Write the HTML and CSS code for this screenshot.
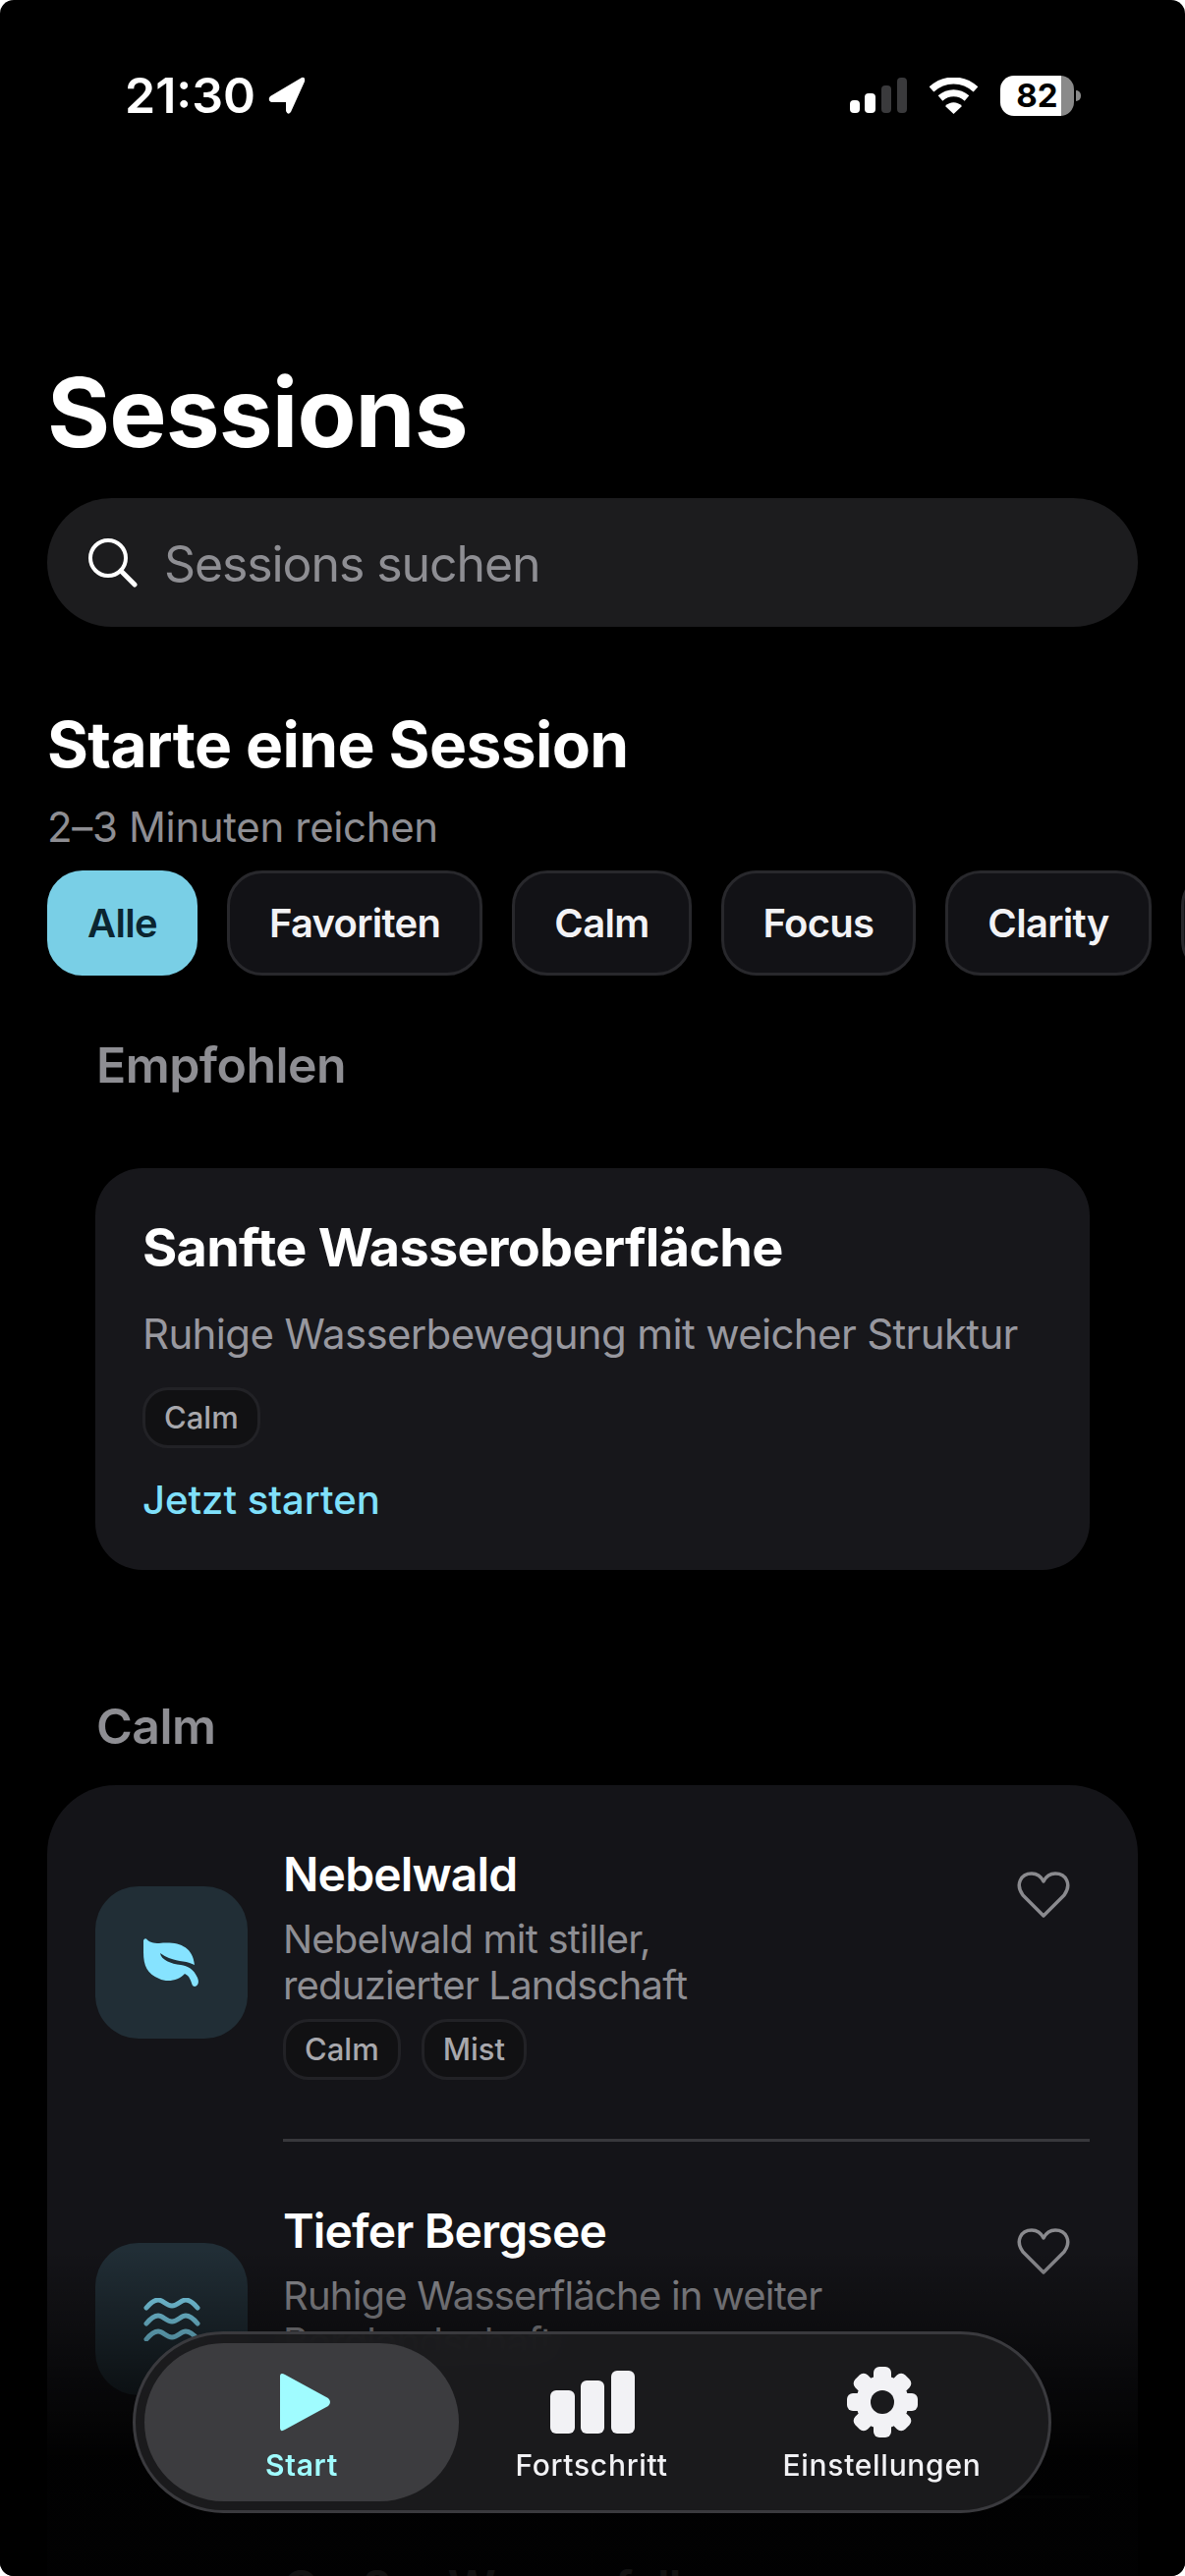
FILE: index.html
```html
<!DOCTYPE html>
<html lang="de">
<head>
    <meta charset="UTF-8">
    <title>Sessions</title>
    <link rel="stylesheet" href="styles.css">
</head>
<body>
<div class="phone">

    <div class="status">
        <div class="status-left">
            <span class="time">21:30</span>
            <svg class="arrow" width="40" height="40" viewBox="0 0 40 40"><path d="M35 2 3 21Q0 25 4 27L19 27 19 36Q21 41 24 37L38 6Q39 1 35 2Z" fill="#fff"/></svg>
        </div>
        <div class="status-right">
            <svg width="58" height="36" viewBox="0 0 58 36">
                <rect x="0" y="23" width="10" height="13" rx="4" fill="#fff"/>
                <rect x="15" y="16" width="11" height="20" rx="4" fill="#fff"/>
                <rect x="32" y="8" width="10" height="28" rx="4" fill="#3a3a3c"/>
                <rect x="48" y="0" width="10" height="36" rx="4" fill="#3a3a3c"/>
            </svg>
            <svg width="49" height="37" viewBox="0 0 49 37">
                <path d="M2 12C15 0 34 0 47 12" fill="none" stroke="#fff" stroke-width="7"/>
                <path d="M11 21C19 14 30 14 38 21" fill="none" stroke="#fff" stroke-width="7"/>
                <path d="M16 29C21 24 28 24 33 29L24.500 37Z" fill="#fff"/>
            </svg>
            <div class="battery"><span>82</span></div>
        </div>
    </div>

    <h1 class="title">Sessions</h1>

    <div class="search">
        <svg width="50" height="50" viewBox="0 0 50 50">
            <circle cx="20" cy="20" r="18" fill="none" stroke="#fff" stroke-width="4"/>
            <path d="M33 33 47 47" stroke="#fff" stroke-width="5" stroke-linecap="round"/>
        </svg>
        <span>Sessions suchen</span>
    </div>

    <h2 class="heading">Starte eine Session</h2>
    <p class="sub">2–3 Minuten reichen</p>

    <div class="chips">
        <div class="chip active">Alle</div>
        <div class="chip">Favoriten</div>
        <div class="chip">Calm</div>
        <div class="chip">Focus</div>
        <div class="chip">Clarity</div>
        <div class="chip chip-more"></div>
    </div>

    <h3 class="group first">Empfohlen</h3>

    <div class="featured">
        <div class="featured-title">Sanfte Wasseroberfläche</div>
        <div class="featured-desc">Ruhige Wasserbewegung mit weicher Struktur</div>
        <div class="tags featured-tags"><span class="tag">Calm</span></div>
        <div class="start-link">Jetzt starten</div>
    </div>

    <h3 class="group">Calm</h3>

    <div class="list">
        <div class="row">
            <div class="thumb">
                <svg width="58" height="50" viewBox="0 0 58 50"><path d="M3 .5C6 4 10 5 16 5 34 3 50 7 52 27L47 25C38 22 30 24 17 15 18 22 28 26 38 27 45 28 51 31 55 40 58 47 53 51 50 48 48 43 47 38 42 36 36 43 24 45 16 41 4 36 0 28 0 14L0 2Q1-.5 3 .5Z" fill="#86e3ff"/></svg>
            </div>
            <div class="row-body">
                <div class="row-text">
                    <div class="row-title">Nebelwald</div>
                    <div class="row-desc">Nebelwald mit stiller,<br>reduzierter Landschaft</div>
                    <div class="tags"><span class="tag">Calm</span><span class="tag">Mist</span></div>
                </div>
                <svg class="heart" width="54" height="50" viewBox="0 0 54 50"><path d="M27 46 6 25C-2 14 4 3 15 3 21 3 25 7 27 11 29 7 33 3 39 3 50 3 56 14 48 25Z" fill="none" stroke="#8a8a8e" stroke-width="3.500" stroke-linejoin="round"/></svg>
            </div>
        </div>
        <div class="row">
            <div class="thumb">
                <svg width="58" height="44" viewBox="0 0 58 44" fill="none" stroke="#86e3ff" stroke-width="5" stroke-linecap="round">
                    <path d="M3 10C8 4 12 2 15 2 20 2 23 8 29 8 35 8 38 2 43 2 46 2 50 4 55 10"/>
                    <path d="M3 26C8 20 12 18 15 18 20 18 23 24 29 24 35 24 38 18 43 18 46 18 50 20 55 26"/>
                    <path d="M3 42C8 36 12 34 15 34 20 34 23 40 29 40 35 40 38 34 43 34 46 34 50 36 55 42"/>
                </svg>
            </div>
            <div class="row-body">
                <div class="row-text">
                    <div class="row-title">Tiefer Bergsee</div>
                    <div class="row-desc">Ruhige Wasserfläche in weiter<br>Berglandschaft</div>
                    <div class="tags"><span class="tag">Calm</span></div>
                </div>
                <svg class="heart" width="54" height="50" viewBox="0 0 54 50"><path d="M27 46 6 25C-2 14 4 3 15 3 21 3 25 7 27 11 29 7 33 3 39 3 50 3 56 14 48 25Z" fill="none" stroke="#8a8a8e" stroke-width="3.500" stroke-linejoin="round"/></svg>
            </div>
        </div>
        <div class="row">
            <div class="thumb"></div>
            <div class="row-body">
                <div class="row-text">
                    <div class="row-title">Großer Wasserfall</div>
                </div>
            </div>
        </div>
    </div>

    <div class="fade"></div>

    <nav class="tabbar">
        <div class="tab selected">
            <svg width="72" height="72" viewBox="0 0 72 72"><path d="M14 10Q14 5 19 8L63 32Q67 36 63 40L19 64Q14 67 14 62Z" fill="#a0fcff"/></svg>
            <span>Start</span>
        </div>
        <div class="tab">
            <svg class="bars" width="88" height="72" viewBox="0 0 88 72" fill="#f2f2f5">
                <rect x="0" y="24" width="25" height="44" rx="6"/>
                <rect x="31" y="14" width="24" height="54" rx="6"/>
                <rect x="62" y="4" width="24" height="64" rx="6"/>
            </svg>
            <span>Fortschritt</span>
        </div>
        <div class="tab">
            <svg width="72" height="72" viewBox="0 0 72 72">
                <mask id="gearhole">
                    <rect width="72" height="72" fill="#fff"/>
                    <circle cx="36" cy="36" r="12" fill="#000"/>
                </mask>
                <g fill="#f2f2f5" mask="url(#gearhole)">
                    <circle cx="36" cy="36" r="27"/>
                    <rect x="27" y="0" width="18" height="72" rx="6"/>
                    <rect x="27" y="0" width="18" height="72" rx="6" transform="rotate(45 36 36)"/>
                    <rect x="27" y="0" width="18" height="72" rx="6" transform="rotate(90 36 36)"/>
                    <rect x="27" y="0" width="18" height="72" rx="6" transform="rotate(135 36 36)"/>
                </g>
            </svg>
            <span>Einstellungen</span>
        </div>
    </nav>

</div>
</body>
</html>
```

FILE: styles.css
```css
* {
    margin: 0;
    padding: 0;
    box-sizing: border-box;
}

body {
    background: #fff;
    font-family: Inter, "Noto Sans", sans-serif;
    color: #fff;
}

.phone {
    position: relative;
    width: 1206px;
    height: 2622px;
    overflow: hidden;
    background: #000;
    padding: 0 48px;
    border-radius: 14px;
}

/* status bar */
.status {
    height: 194px;
    margin: 0 -48px;
    padding: 0 113px 0 127px;
    display: flex;
    align-items: center;
    justify-content: space-between;
}
.status-left {
    display: flex;
    align-items: center;
    gap: 12px;
}
.time {
    font-size: 50px;
    font-weight: 600;
    line-height: 60px;
}
.status-right {
    display: flex;
    align-items: center;
    gap: 23px;
}
.battery {
    position: relative;
    width: 75px;
    height: 41px;
    border-radius: 14px;
    background: linear-gradient(90deg, #fff 62px, #8a8a8a 62px);
    color: #000;
    font-size: 33px;
    font-weight: 700;
    line-height: 41px;
    text-align: center;
}
.battery::after {
    content: "";
    position: absolute;
    right: -7px;
    top: 15px;
    width: 5px;
    height: 11px;
    border-radius: 0 5px 5px 0;
    background: #8a8a8a;
}

/* header */
.title {
    margin-top: 176px;
    font-size: 98px;
    font-weight: 700;
    line-height: 100px;
    letter-spacing: -.9px;
}
.search {
    margin-top: 37px;
    height: 131px;
    border-radius: 66px;
    background: #1c1c1e;
    padding: 2px 0 0 42px;
    display: flex;
    align-items: center;
    gap: 27px;
    font-size: 50px;
    letter-spacing: -1.1px;
    color: #8e8e93;
}
.search svg {
    margin-top: -2px;
}
.heading {
    margin-top: 85px;
    font-size: 64px;
    font-weight: 700;
    line-height: 70px;
    letter-spacing: -.6px;
}
.sub {
    margin-top: 24px;
    font-size: 42px;
    line-height: 50px;
    letter-spacing: -.35px;
    color: #8e8e93;
}

/* filter chips */
.chips {
    margin-top: 19px;
    display: flex;
    gap: 30px;
}
.chip {
    flex: none;
    height: 107px;
    padding: 0 40px;
    border: 3px solid #28282c;
    border-radius: 36px;
    background: #121216;
    font-size: 40px;
    font-weight: 600;
    line-height: 101px;
    letter-spacing: -.7px;
    color: #f2f2f5;
}
.chip.active {
    padding: 0 38px;
    background: #79cfe6;
    border-color: #79cfe6;
    color: #0b2530;
}

/* groups */
.group {
    margin-top: 129px;
    margin-left: 50px;
    font-size: 50px;
    font-weight: 600;
    line-height: 60px;
    letter-spacing: -.55px;
    color: #8e8e93;
}
.group.first {
    margin-top: 61px;
}

.featured {
    margin: 75px 49px 0;
    height: 409px;
    padding: 46px 48px 0;
    border-radius: 48px;
    background: #17171b;
}
.featured-title {
    font-size: 54px;
    font-weight: 700;
    line-height: 70px;
    letter-spacing: -.75px;
}
.featured-desc {
    margin-top: 25px;
    font-size: 42px;
    line-height: 56px;
    letter-spacing: -.65px;
    white-space: nowrap;
    color: #98989f;
}
.featured-tags {
    margin-top: 26px;
}
.start-link {
    margin-top: 28px;
    font-size: 40px;
    font-weight: 500;
    line-height: 50px;
    color: #7fe0fb;
}

.tags {
    display: flex;
    gap: 21px;
}
.tag {
    height: 62px;
    padding: 0 19px;
    border: 3px solid #222226;
    border-radius: 26px;
    background: #111113;
    font-size: 31px;
    font-weight: 500;
    line-height: 56px;
    color: #a8a8ad;
}

/* session list */
.list {
    margin-top: 30px;
    border-radius: 70px;
    background: #141418;
    padding: 0 49px;
}
.row {
    display: flex;
    gap: 36px;
}
.thumb {
    flex: none;
    width: 155px;
    height: 155px;
    margin-top: 103px;
    border-radius: 44px;
    background: #212e36;
    display: flex;
    align-items: center;
    justify-content: center;
}
.row-body {
    flex: 1;
    display: flex;
    justify-content: space-between;
    padding: 61px 20px 60px 0;
    border-bottom: 3px solid #38383c;
}
.row:last-child .row-body {
    border-bottom: 0;
}
.row-title {
    font-size: 48px;
    font-weight: 600;
    line-height: 60px;
    letter-spacing: -.85px;
}
.row-desc {
    margin-top: 12px;
    font-size: 40px;
    line-height: 47px;
    letter-spacing: -.8px;
    color: #8e8e93;
}
.row-text .tags {
    margin-top: 11px;
}
.heart {
    margin-top: 26px;
}

/* fades the list out under the tab bar */
.fade {
    position: absolute;
    left: 0;
    right: 0;
    top: 2290px;
    bottom: 0;
    background: linear-gradient(180deg, rgba(0,0,0,0) 0, rgba(0,0,0,.93) 210px, rgba(0,0,0,.93) 100%);
}

/* tab bar */
.tabbar {
    position: absolute;
    left: 135px;
    top: 2373px;
    width: 935px;
    height: 185px;
    padding: 9px;
    border: 3px solid #3a3a3e;
    border-radius: 93px;
    background: rgba(28,28,30,.94);
    backdrop-filter: blur(12px);
    display: grid;
    grid-template-columns: 320px 270px 1fr;
}
.tab {
    padding-top: 24px;
    display: flex;
    flex-direction: column;
    align-items: center;
    gap: 8px;
    font-size: 30px;
    font-weight: 500;
    letter-spacing: .7px;
    line-height: 40px;
    color: #f2f2f5;
}
.tab .bars {
    margin-left: 3px;
}
.tab.selected {
    border-radius: 81px;
    background: #3c3c3f;
    color: #a0fcff;
    font-weight: 600;
}
```
